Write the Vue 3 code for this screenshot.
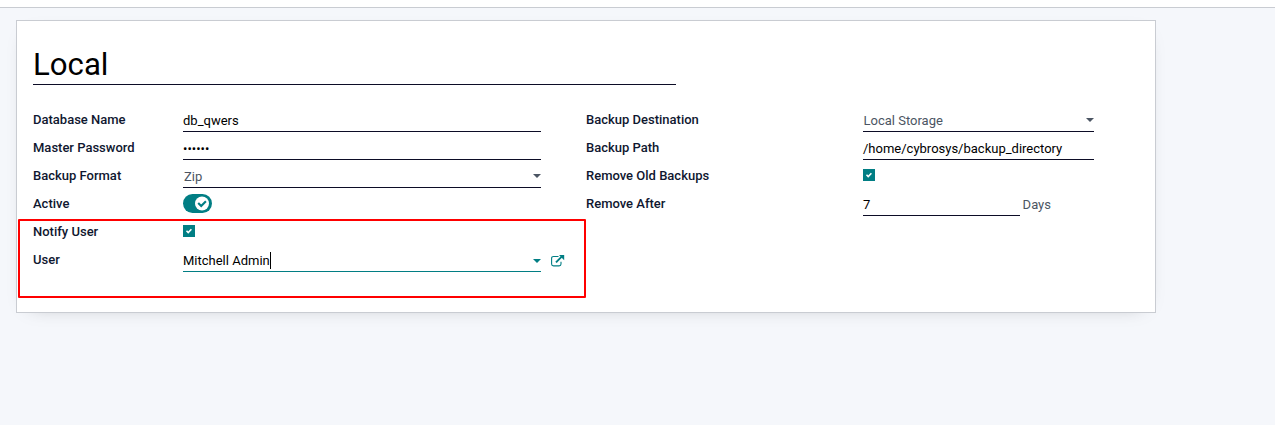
<script setup>
const left = [
  { label: 'Database Name', type: 'text', value: 'db_qwers' },
  { label: 'Master Password', type: 'password', value: '••••••' },
  { label: 'Backup Format', type: 'select', value: 'Zip' },
  { label: 'Active', type: 'toggle' },
  { label: 'Notify User', type: 'check' },
  { label: 'User', type: 'many2one', value: 'Mitchell Admin' },
]
const right = [
  { label: 'Backup Destination', type: 'select', value: 'Local Storage' },
  { label: 'Backup Path', type: 'text', value: '/home/cybrosys/backup_directory' },
  { label: 'Remove Old Backups', type: 'check' },
  { label: 'Remove After', type: 'days', value: '7' },
]
const groups = [
  { name: 'left', rows: left },
  { name: 'right', rows: right },
]
</script>

<template>
  <div class="page">
    <div class="topbar"></div>
    <main class="sheet">
      <h1 class="title">Local</h1>
      <div class="groups">
        <section v-for="g in groups" :key="g.name" class="group" :class="g.name">
          <div v-for="r in g.rows" :key="r.label" class="row">
            <label class="label">{{ r.label }}</label>
            <div v-if="r.type === 'toggle'" class="toggle">
              <svg width="29" height="19" viewBox="0 0 29 19">
                <rect width="29" height="19" rx="9.5" fill="#017e84" />
                <circle cx="19" cy="9.5" r="7" fill="#fff" />
                <path d="M15.2 8.9l3 3 4.7-4.7" fill="none" stroke="#017e84" stroke-width="2.1" />
              </svg>
            </div>
            <div v-else-if="r.type === 'check'" class="check">
              <svg width="12" height="12" viewBox="0 0 12 12">
                <path d="M3.5 5.8l1.7 1.7 3.2-3.2" fill="none" stroke="#fff" stroke-width="1.6" />
              </svg>
            </div>
            <template v-else>
              <div class="field" :class="r.type">
                <span class="value">{{ r.value }}</span>
                <i v-if="r.type === 'many2one'" class="caret"></i>
                <svg v-if="r.type === 'select' || r.type === 'many2one'" class="arrow" width="8" height="4" viewBox="0 0 8 4">
                  <path d="M0 0h8L4 4z" fill="currentColor" />
                </svg>
              </div>
              <span v-if="r.type === 'days'" class="unit">Days</span>
              <svg v-if="r.type === 'many2one'" class="external" width="14" height="12" viewBox="0 0 14 12">
                <path d="M7.5 1.5H2.5Q.6 1.5 .6 3.4v5.6q0 1.9 1.9 1.9h5.6q1.9 0 1.9-1.9V6.8" fill="none" stroke="#017e84" stroke-width="1.1" />
                <path d="M5 7.4L10.7 1.7" fill="none" stroke="#017e84" stroke-width="1.9" />
                <path d="M8 0h5.2v5.2z" fill="#017e84" />
              </svg>
            </template>
          </div>
        </section>
      </div>
      <div class="highlight"></div>
    </main>
  </div>
</template>

<style>
body {
  background: #f5f7fb;
  overflow: hidden;
}
</style>

<style scoped>
.page {
  height: 425px;
  background: #f5f7fb;
  font: 13px/20px Roboto, sans-serif;
  color: #0f1730;
}
.topbar {
  box-sizing: border-box;
  height: 8px;
  background: #fff;
  border-bottom: 1px solid #c9ccd2;
}
.sheet {
  position: relative;
  box-sizing: border-box;
  width: 1140px;
  height: 293px;
  margin: 12px 0 0 16px;
  padding: 21px 16px 0;
  background: #fff;
  border: 1px solid #c9ccd2;
  box-shadow: 0 5px 20px -15px rgba(0, 0, 0, 0.4);
}
.title {
  box-sizing: border-box;
  width: 643px;
  height: 43px;
  margin: 0 0 25px;
  border-bottom: 1px solid #0c0c26;
  font-size: 31.2px;
  font-weight: 400;
  line-height: 46px;
  color: #000;
}
.groups {
  display: flex;
}
.group {
  display: flex;
  flex-direction: column;
  gap: 6px;
  width: 553px;
}
.row {
  display: flex;
  height: 22px;
}
.label {
  width: 150px;
  flex: none;
  font-weight: 500;
}
.right .label {
  width: 277px;
}
.field {
  display: flex;
  box-sizing: border-box;
  width: 358px;
  height: 22px;
  padding-top: 1px;
  border-bottom: 1px solid #0c0c26;
  color: #000;
}
.right .field {
  width: 231px;
}
.right .field.days {
  width: 157px;
}
.field.select {
  color: #4b5563;
  padding-left: 1px;
}
.right .field.select {
  padding-left: 0.5px;
}
.field.many2one {
  border-color: #017e84;
}
.caret {
  width: 1px;
  height: 17px;
  margin-top: 1px;
  background: #000;
}
.arrow {
  margin: 7px 0 0 auto;
  color: #4b5563;
}
.many2one .arrow {
  margin-top: 8px;
  color: #017e84;
}
.external {
  margin: 5px 0 0 10px;
}
.unit {
  margin: 1px 0 0 2.6px;
  color: #4b5563;
}
.toggle {
  height: 19px;
}
.toggle svg,
.check svg {
  display: block;
}
.check {
  width: 12px;
  height: 12px;
  margin-top: 3px;
  background: #017e84;
}
.highlight {
  position: absolute;
  left: 1px;
  top: 198px;
  box-sizing: border-box;
  width: 568px;
  height: 79px;
  border: 2px solid #f00;
  border-radius: 1px;
}
</style>
